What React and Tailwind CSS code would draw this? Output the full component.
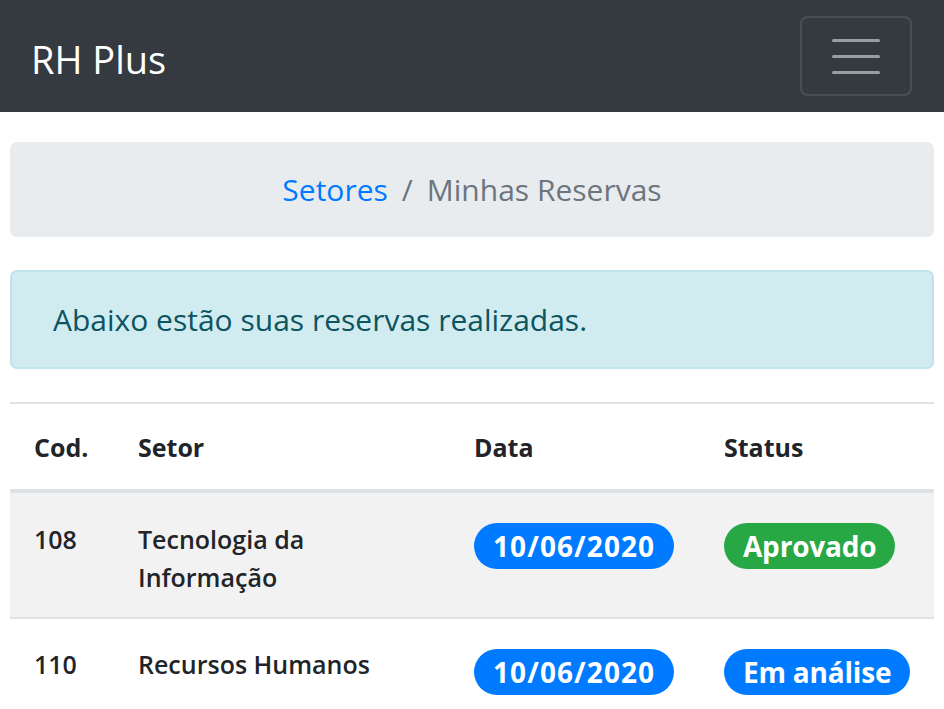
const reservas = [
  { cod: '108', setor: 'Tecnologia da Informação', data: '10/06/2020', status: 'Aprovado' },
  { cod: '110', setor: 'Recursos Humanos', data: '10/06/2020', status: 'Em análise' },
];

const Badge = ({ children, color, wide }) => (
  <span
    className={`inline-flex items-center h-[46px] px-[19px] rounded-full text-white font-bold text-[28px] leading-none ${wide ? 'tracking-[1.1px]' : 'tracking-[-0.2px]'} ${color}`}
  >
    {children}
  </span>
);

const App = () => {
  return (
    <div className="min-h-[709px] bg-white" style={{ fontFamily: '"Open Sans", "Noto Sans", sans-serif' }}>
      <nav className="h-[112px] bg-[#343a40] flex items-center justify-between pl-[31px] pr-[32px]">
        <span className="text-white text-[38px] pt-[6px]">RH Plus</span>
        <button className="w-[112px] h-[80px] border-2 border-white/10 rounded-[8px] flex flex-col items-center justify-center gap-[13px]">
          <span className="block w-[48px] h-[3px] rounded-full bg-[#9a9da0]" />
          <span className="block w-[48px] h-[3px] rounded-full bg-[#9a9da0]" />
          <span className="block w-[48px] h-[3px] rounded-full bg-[#9a9da0]" />
        </button>
      </nav>

      <div className="px-[10px]">
        <div className="mt-[30px] h-[95px] bg-[#e9ecef] rounded-[7px] flex items-center justify-center text-[30px]">
          <span className="text-[#007bff]">Setores</span>
          <span className="text-[#6c757d] px-[14px]">/</span>
          <span className="text-[#6c757d]">Minhas Reservas</span>
        </div>

        <div className="mt-[33px] h-[99px] bg-[#d1ecf1] border-2 border-[#bee5eb] rounded-[7px] flex items-center pl-[41px] text-[#0c5460] text-[30px]">
          Abaixo estão suas reservas realizadas.
        </div>

        <table className="mt-[33px] w-full table-fixed border-collapse text-[#212529] text-[25px] leading-[38px] font-semibold">
          <colgroup>
            <col className="w-[104px]" />
            <col className="w-[336px]" />
            <col className="w-[250px]" />
            <col />
          </colgroup>
          <thead>
            <tr className="border-t-2 border-b-[4px] border-[#dee2e6] h-[88px]">
              <th className="text-left font-bold pl-[24px] align-middle">Cod.</th>
              <th className="text-left font-bold pl-[24px] align-middle">Setor</th>
              <th className="text-left font-bold pl-[24px] align-middle">Data</th>
              <th className="text-left font-bold pl-[24px] align-middle">Status</th>
            </tr>
          </thead>
          <tbody>
            {reservas.map((r, i) => (
              <tr key={r.cod} className={`border-b-2 border-[#dee2e6] ${i % 2 === 0 ? 'bg-[#f2f2f2]' : ''}`}>
                <td className={`pl-[24px] ${i === 0 ? 'pt-[27px] pb-[21px]' : 'pt-[26px] pb-[26px]'} align-top`}>{r.cod}</td>
                <td className={`pl-[24px] ${i === 0 ? 'pt-[27px] pb-[21px]' : 'pt-[26px] pb-[26px]'} align-top pr-[60px]`}>{r.setor}</td>
                <td className={`pl-[24px] ${i === 0 ? 'pt-[30px]' : 'pt-[30px]'} align-top`}>
                  <Badge color="bg-[#007bff]" wide>{r.data}</Badge>
                </td>
                <td className={`pl-[24px] ${i === 0 ? 'pt-[30px]' : 'pt-[30px]'} align-top`}>
                  <Badge color={r.status === 'Aprovado' ? 'bg-[#28a745]' : 'bg-[#007bff]'}>{r.status}</Badge>
                </td>
              </tr>
            ))}
          </tbody>
        </table>
      </div>
    </div>
  );
};

export default App;
